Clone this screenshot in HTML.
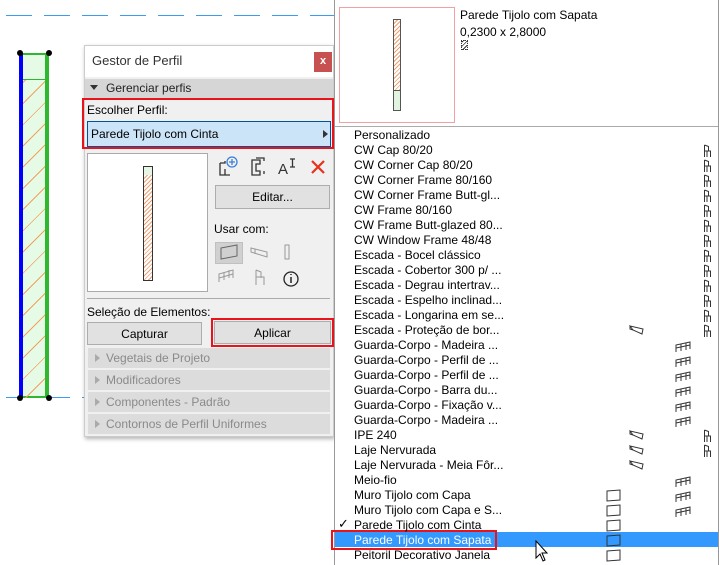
<!DOCTYPE html>
<html><head><meta charset="utf-8"><style>
*{margin:0;padding:0;box-sizing:border-box}
body{width:719px;height:565px;overflow:hidden;background:#fff;font-family:"Liberation Sans",sans-serif;font-size:12px;color:#000;position:relative}
.a{position:absolute}
.dsh{position:absolute;height:1px;width:26px;background:#3d9cf0}
.sec{position:absolute;left:88px;width:242px;height:20px;background:#dcdcdc;color:#8a8a8a;font-size:12px;line-height:20px;padding-left:18px}
.sec:before{content:"";position:absolute;left:7px;top:6px;border-left:5px solid #aaa;border-top:4px solid transparent;border-bottom:4px solid transparent}
.btn{position:absolute;background:#e1e1e1;border:1px solid #adadad;text-align:center;line-height:22px}
.row{position:absolute;left:354px;height:15px;line-height:15px;font-size:12px;white-space:nowrap}
</style></head><body>
<div id="D"></div>
<!-- wall -->
<div class="a" style="left:20px;top:53px;width:29px;height:345px;background:#e6fbe6;border:2px solid #2fb82f;border-left:none"></div>
<div class="a" style="left:20px;top:79px;width:26px;height:319px;background:repeating-linear-gradient(-45deg,transparent 0 14px,#f0a060 14px 15px)"></div>
<div class="a" style="left:20px;top:79px;width:26px;height:1px;background:#2fb82f"></div>
<div class="a" style="left:45px;top:53px;width:2px;height:345px;background:#2fb82f"></div>
<div class="a" style="left:19px;top:53px;width:4px;height:345px;background:#0000ff"></div>
<div class="a" style="left:17px;top:50px;width:6px;height:6px;border-radius:3px;background:#000"></div>
<div class="a" style="left:46px;top:50px;width:6px;height:6px;border-radius:3px;background:#000"></div>
<div class="a" style="left:17px;top:395px;width:6px;height:6px;border-radius:3px;background:#000"></div>
<div class="a" style="left:46px;top:395px;width:6px;height:6px;border-radius:3px;background:#000"></div>

<!-- dialog -->
<div class="a" style="left:84px;top:45px;width:250px;height:392px;background:#f0f0f0;border:1px solid #ccc;box-shadow:1px 2px 4px rgba(0,0,0,.3)"></div>
<div class="a" style="left:85px;top:46px;width:248px;height:31px;background:#fff"></div>
<div class="a" style="left:92px;top:53px;font-size:13px;color:#333">Gestor de Perfil</div>
<div class="a" style="left:314px;top:52px;width:18px;height:20px;background:#c75050;color:#fff;font-size:11px;text-align:center;line-height:19px;font-weight:bold">x</div>
<div class="a" style="left:85px;top:79px;width:248px;height:19px;background:#d6d6d6"></div>
<div class="a" style="left:90px;top:85px;border-top:5px solid #333;border-left:4px solid transparent;border-right:4px solid transparent"></div>
<div class="a" style="left:106px;top:81px;color:#222">Gerenciar perfis</div>
<div class="a" style="left:82px;top:98px;width:252px;height:51px;border:2px solid #e8131b"></div>
<div class="a" style="left:87px;top:103px;">Escolher Perfil:</div>
<div class="a" style="left:87px;top:121px;width:244px;height:26px;background:#cce4f7;border:1px solid #005499;line-height:24px;padding-left:3px">Parede Tijolo com Cinta</div>
<div class="a" style="left:323px;top:130px;border-left:5px solid #333;border-top:4px solid transparent;border-bottom:4px solid transparent"></div>
<!-- preview -->
<div class="a" style="left:87px;top:153px;width:121px;height:139px;background:#fff;border:1px solid #aaa"></div>
<div class="a" style="left:143px;top:166px;width:10px;height:115px;border:1px solid #333;background:repeating-linear-gradient(-45deg,#fff 0 2px,#f0a070 2px 3px)"></div>
<div class="a" style="left:144px;top:167px;width:8px;height:8px;background:#e6f6e6"></div>
<!-- icons -->
<svg class="a" style="left:218px;top:155px" width="115" height="22" viewBox="0 0 115 22" fill="none" stroke="#333" stroke-width="1.3">
<path d="M2 8v12h10M2 8h5v-2M7 14v6"/><circle cx="14" cy="7" r="5" stroke="#3b7fd9"/><path d="M14 4v6M11 7h6" stroke="#3b7fd9"/>
<path d="M34 5h8v4h-4v7h4v4h-8z M38 3h8v3 M46 16v3"/>
<text x="60" y="19" font-size="15" fill="#333" stroke="none" font-family="Liberation Sans">A</text><path d="M72 4h5M74.5 4v8M72 12h5"/>
<path d="M94 6l12 12M106 6l-12 12" stroke="#e8301c" stroke-width="2.2"/>
</svg>
<div class="btn" style="left:215px;top:185px;width:115px;height:24px">Editar...</div>
<div class="a" style="left:214px;top:222px">Usar com:</div>
<div class="a" style="left:215px;top:242px;width:28px;height:22px;background:#d0d0d0;border:1px solid #c0c0c0"></div>
<svg class="a" style="left:215px;top:242px" width="90" height="50" fill="none" stroke="#999" stroke-width="1">
<path d="M6 6l16-3v11l-16 3z" stroke="#666"/>
<path d="M36 6l16 4v5l-16-5zM40 7v5"/>
<path d="M70 3h4v14h-4z"/>
<path d="M4 40v-8l14-4v8M4 36l14-4M9 38v-8M14 36v-8"/>
<path d="M41 28v15M41 35h8v8M41 28l5 2v6"/>
<circle cx="76" cy="37" r="7" stroke="#222" stroke-width="1.3"/><path d="M76 35v6M76 32v1" stroke="#222" stroke-width="1.5"/>
</svg>
<div class="a" style="left:87px;top:298px;width:243px;height:1px;background:#aaa"></div>
<div class="a" style="left:87px;top:305px">Seleção de Elementos:</div>
<div class="btn" style="left:87px;top:322px;width:115px;height:23px">Capturar</div>
<div class="a" style="left:211px;top:318px;width:123px;height:29px;border:2px solid #e8131b"></div>
<div class="btn" style="left:214px;top:321px;width:117px;height:23px">Aplicar</div>
<div class="sec" style="top:348px">Vegetais de Projeto</div>
<div class="sec" style="top:370px">Modificadores</div>
<div class="sec" style="top:392px">Componentes - Padrão</div>
<div class="sec" style="top:414px">Contornos de Perfil Uniformes</div>

<!-- popup -->
<div class="a" style="left:334px;top:0;width:385px;height:565px;background:#fff;border-left:1px solid #999;border-right:1px solid #999"></div>
<div class="a" style="left:335px;top:126px;width:383px;height:1px;background:#aaa"></div>
<div class="a" style="left:339px;top:7px;width:116px;height:116px;border:1px solid #f3a0a0"></div>
<div class="a" style="left:393px;top:19px;width:8px;height:92px;border:1px solid #555;background:repeating-linear-gradient(-45deg,#fff 0 2px,#f0a070 2px 3px)"></div>
<div class="a" style="left:394px;top:90px;width:6px;height:20px;background:#e0f4e0;border-top:1px solid #555"></div>
<div class="a" style="left:460px;top:8px">Parede Tijolo com Sapata</div>
<div class="a" style="left:460px;top:25px">0,2300 x 2,8000</div>
<div class="a" style="left:461px;top:40px;width:7px;height:10px;border:1px dotted #333;background:repeating-linear-gradient(-45deg,#fff 0 2px,#333 2px 3px)"></div>
<div class="a" style="left:335px;top:532px;width:383px;height:15px;background:#3399ff"></div>
<div class="a" style="left:331px;top:530px;width:166px;height:20px;border:2px solid #e8131b"></div>
<div class="a" style="left:338px;top:516px;font-size:13px">✓</div>
<div id="L"></div>
<svg class="a" style="left:530px;top:540px" width="20" height="24"><path d="M6 1v17l4-4 3 7 2-1-3-7h5z" fill="#fff" stroke="#000"/></svg>
<svg width="0" height="0" style="position:absolute"><defs>
<g id="ch" fill="none" stroke="#333" stroke-width="1"><path d="M1.5 1v12M1.5 7h6v6M1.5 1l4 1.5v4.5M4 7v6"/></g>
<g id="bm" fill="none" stroke="#333" stroke-width="1"><path d="M1 2l13 3-1 5-9-4zM1 2v3l3 1"/></g>
<g id="rl" fill="none" stroke="#333" stroke-width="1"><path d="M1 13v-7l14-3v7M1 9l14-3M6 12v-7M11 11v-7"/></g>
<g id="sl" fill="none" stroke="#333" stroke-width="1"><path d="M1 2l13-1v10l-13 1z"/></g>
</defs></svg>
<script>
var d="";for(var x=6;x<336;x+=38)d+='<div class="dsh" style="left:'+x+'px;top:15px"></div>';
for(var x=6;x<86;x+=38)d+='<div class="dsh" style="left:'+x+'px;top:397px"></div>';
document.getElementById("D").innerHTML=d;
var R=[["Personalizado",""],["CW Cap 80/20","c"],["CW Corner Cap 80/20","c"],["CW Corner Frame 80/160","c"],["CW Corner Frame Butt-gl...","c"],["CW Frame 80/160","c"],["CW Frame Butt-glazed 80...","c"],["CW Window Frame 48/48","c"],["Escada - Bocel clássico","c"],["Escada - Cobertor 300 p/ ...","c"],["Escada - Degrau intertrav...","c"],["Escada - Espelho inclinad...","c"],["Escada - Longarina em se...","c"],["Escada - Proteção de bor...","bc"],["Guarda-Corpo -  Madeira ...","r"],["Guarda-Corpo -  Perfil de ...","r"],["Guarda-Corpo -  Perfil de ...","r"],["Guarda-Corpo - Barra du...","r"],["Guarda-Corpo - Fixação v...","r"],["Guarda-Corpo - Madeira ...","r"],["IPE 240","bc"],["Laje Nervurada","bc"],["Laje Nervurada - Meia Fôr...","b"],["Meio-fio","r"],["Muro Tijolo com Capa","sr"],["Muro Tijolo com Capa e S...","sr"],["Parede Tijolo com Cinta","s"],["Parede Tijolo com Sapata","s"],["Peitoril Decorativo Janela","s"]];
var h="";R.forEach(function(r,i){var y=128+i*15;h+='<div class="row" style="top:'+y+'px;'+(i==27?'color:#fff':'')+'">'+r[0]+'</div>';
var f=r[1];function ic(id,x){h+='<svg class="a" style="left:'+x+'px;top:'+(y+1)+'px" width="16" height="14"><use href="#'+id+'"/></svg>';}
if(f.indexOf("s")>=0)ic("sl",606);if(f.indexOf("b")>=0)ic("bm",629);if(f.indexOf("r")>=0)ic("rl",675);if(f.indexOf("c")>=0)ic("ch",703);});
document.getElementById("L").innerHTML=h;
</script>
</body></html>
